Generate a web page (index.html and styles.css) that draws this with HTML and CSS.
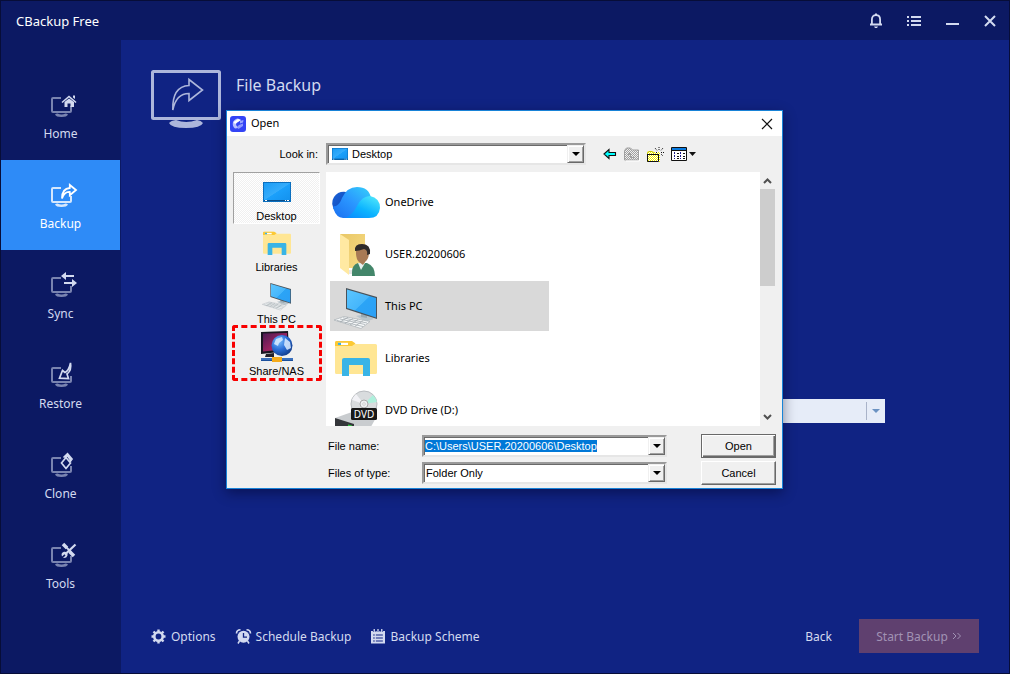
FILE: index.html
```html
<!DOCTYPE html>
<html lang="en">
<head>
<meta charset="utf-8">
<title>CBackup Free</title>
<link rel="stylesheet" href="styles.css">
</head>
<body>
<svg class="defs" aria-hidden="true">
  <defs>
    <linearGradient id="screen" x1="0" y1="0" x2="1" y2="1"><stop offset="0" stop-color="#1b9cf5"/><stop offset=".5" stop-color="#35acfb"/><stop offset=".52" stop-color="#1ba0fb"/><stop offset="1" stop-color="#1492ee"/></linearGradient>
    <linearGradient id="pcscreen" x1="0" y1="0" x2="1" y2="1"><stop offset="0" stop-color="#5cc6ff"/><stop offset=".5" stop-color="#46b6fb"/><stop offset=".52" stop-color="#2ba4f6"/><stop offset="1" stop-color="#2b9ff5"/></linearGradient>
    <linearGradient id="cloudA" x1="0" y1="0" x2="1" y2="1"><stop offset="0" stop-color="#1a63d8"/><stop offset="1" stop-color="#0c3fae"/></linearGradient>
    <linearGradient id="cloudB" x1="0" y1="1" x2="1" y2="0"><stop offset="0" stop-color="#1a6ff0"/><stop offset=".5" stop-color="#2a96ff"/><stop offset="1" stop-color="#35d0fa"/></linearGradient>
    <linearGradient id="cloudC" x1="0" y1="1" x2=".8" y2="0"><stop offset="0" stop-color="#0a86ff"/><stop offset=".5" stop-color="#0cb4ff"/><stop offset="1" stop-color="#4be3fb"/></linearGradient>
    <linearGradient id="folder" x1="0" y1="0" x2="1" y2="1"><stop offset="0" stop-color="#e9c766"/><stop offset="1" stop-color="#f7dc86"/></linearGradient>
    <linearGradient id="nas" x1="0" y1="0" x2="1" y2="1"><stop offset="0" stop-color="#4a1a52"/><stop offset=".6" stop-color="#a02462"/><stop offset="1" stop-color="#d8505c"/></linearGradient>
    <radialGradient id="globe" cx=".35" cy=".3" r=".8"><stop offset="0" stop-color="#7cc0ff"/><stop offset=".5" stop-color="#2b6fd8"/><stop offset="1" stop-color="#10357f"/></radialGradient>
    <symbol id="monitor" viewBox="0 0 32 26">
      <path d="M16 5H8Q7 5 7 6V18Q7 19 8 19H25Q26 19 26 18V13" fill="none" stroke="currentColor" stroke-width="2"/>
      <path d="M10 21.500Q11 20.500 12.500 20.500Q16.500 22.500 20.500 20.500Q22 20.500 23 21.500Q22 24 16.500 24Q11 24 10 21.500Z" fill="currentColor"/>
    </symbol>
    <symbol id="libs" viewBox="0 0 48 48">
      <path d="M3 8.500Q3 7 4.500 7H19L23 10H43.500Q45 10 45 11.500V38.500Q45 40 43.500 40H4.500Q3 40 3 38.500Z" fill="#ffe694"/>
      <path d="M3 12V8.500Q3 7 4.500 7H20L23.500 9.500L20 12Z" fill="#fcc934"/>
      <path d="M6 8.800H16V11H6Z" fill="#fff"/><path d="M6 8.800H9V11H6Z" fill="#39b1e6"/>
      <path d="M10 42V26Q10 24 12 24H36Q38 24 38 26V42H31V31H17V42Z" fill="#39b4e6"/>
    </symbol>
    <symbol id="pc" viewBox="0 0 48 48">
      <path d="M24 34L34 32L42 37L34 39.500Z" fill="#b9c4cb"/><path d="M29 29L35 31V36L29 35Z" fill="#9caab3"/>
      <path d="M14 6L45 15V37L14 27Z" fill="#49525a"/>
      <path d="M15 7.500L44 16V35.500L15 26Z" fill="url(#pcscreen)"/>
      <path d="M2 38L12 34.500L38 39.500L29 46.500Z" fill="#f7f9fa" stroke="#a9b0b5" stroke-width=".7"/>
      <path d="M5 38.500L31 44.500M8 37L33 42.500M11 35.800L35 41M8 40L16 35.300M13 41.500L21 36.500M18 43L26 37.500M23 44.300L31 38.700" stroke="#a3abb0" stroke-width=".8" fill="none"/>
    </symbol>
    <symbol id="desk" viewBox="0 0 28 20"><path d="M0 0H28V20H0Z" fill="#0a6fbf"/><path d="M1 1H27V18H1Z" fill="url(#screen)"/><path d="M1 18H27V19H1Z" fill="#0b4e88"/><path d="M2 18H4V19H2ZM22 18H23V19H22ZM24 18H26V19H24Z" fill="#fff"/></symbol>
    <pattern id="mesh" width="2" height="2" patternUnits="userSpaceOnUse"><path d="M0 0H2V2H0Z" fill="#fff"/><path d="M0 0H1V1H0ZM1 1H2V2H1Z" fill="#f4f000"/></pattern>
    <pattern id="meshOff" width="2" height="2" patternUnits="userSpaceOnUse"><path d="M0 0H2V2H0Z" fill="#f0f0f0"/><path d="M0 0H1V1H0ZM1 1H2V2H1Z" fill="#a0a0a0"/></pattern>
  </defs>
</svg>

<div class="app">
  <header class="titlebar">
    <h1 class="app-name">CBackup Free</h1>
    <div class="window-tools">
      <button class="tool" aria-label="Notifications"><svg width="14" height="16" viewBox="0 0 14 16"><path d="M2.900 11.500V6.500Q2.900 2.200 7 2.200T11.100 6.500V11.500" fill="none" stroke="currentColor" stroke-width="1.800"/><path d="M1 10.500H13V12.500H1ZM6 .5H8V2H6ZM5 13.500H9L8 15H6Z" fill="currentColor"/></svg></button>
      <button class="tool" aria-label="Menu"><svg width="14" height="12" viewBox="0 0 14 12"><path d="M0 1H2V3H0ZM4 1H14V3H4ZM0 5H2V7H0ZM4 5H14V7H4ZM0 9H2V11H0ZM4 9H14V11H4Z" fill="currentColor"/></svg></button>
      <button class="tool" aria-label="Minimize"><svg width="14" height="12" viewBox="0 0 14 12"><path d="M1 8H14V10H1Z" fill="currentColor"/></svg></button>
      <button class="tool" aria-label="Close"><svg width="12" height="12" viewBox="0 0 12 12"><path d="M1 1L11 11M11 1L1 11" stroke="currentColor" stroke-width="2"/></svg></button>
    </div>
  </header>

  <nav class="sidebar">
    <a class="nav-item" href="#home"><svg class="nav-icon" viewBox="0 0 32 26"><use class="dim" href="#monitor"/><path d="M17 9.500L24 3.500L31 9.500" fill="none" stroke="currentColor" stroke-width="1.600"/><path d="M28 2.500H30V6L28 4.500ZM19.500 9L24 5.500L29 9V14H25.500V10.500H22.500V14H19.500Z" fill="currentColor"/></svg>Home</a>
    <a class="nav-item active" href="#backup"><svg class="nav-icon" viewBox="0 0 32 26"><use class="dim" href="#monitor"/><path d="M17 15.500Q17 5.500 24.800 5V2L31 7L24.800 12.200V9Q19.500 8.500 17 15.500Z" fill="none" stroke="currentColor" stroke-width="1.800"/></svg>Backup</a>
    <a class="nav-item" href="#sync"><svg class="nav-icon" viewBox="0 0 32 26"><use class="dim" href="#monitor"/><path d="M16 3L21 -1V2H29V4H21V7ZM32 10L27 14V11H19V9H27V6Z" fill="currentColor"/></svg>Sync</a>
    <a class="nav-item" href="#restore"><svg class="nav-icon" viewBox="0 0 32 26"><use class="dim" href="#monitor"/><path d="M25.500 0Q26.800 7.500 22 11L23.500 15.500L14.500 15.200L17.500 7.500L20 9.500Q24 7.500 25.500 0Z" fill="none" stroke="currentColor" stroke-width="1.700"/></svg>Restore</a>
    <a class="nav-item" href="#clone"><svg class="nav-icon" viewBox="0 0 32 26"><use class="dim" href="#monitor"/><path d="M21 4.500L25.500 10L21 15.500L16.500 10ZM18.500 4.500L22.500 .8L27 6L24.500 9.500M20 4.500L22.500 2.500L25.500 7" fill="none" stroke="currentColor" stroke-width="1.700"/></svg>Clone</a>
    <a class="nav-item" href="#tools"><svg class="nav-icon" viewBox="0 0 32 26"><use class="dim" href="#monitor"/><path d="M18 1L22 5M24.500 8.500L29 13" stroke="currentColor" stroke-width="3.500"/><path d="M21 4L26 9" stroke="currentColor" stroke-width="1.800"/><path d="M30.500 1.500L21 10.500" stroke="currentColor" stroke-width="2.200"/><path d="M17 13.500Q15.500 10 19 8.800Q23 8.500 22.500 12.500Q21.500 15.500 18 15L20.500 12.500L19.500 11.200Z" fill="currentColor"/></svg>Tools</a>
  </nav>

  <main class="main">
    <div class="page-head">
      <svg width="70" height="58" viewBox="0 0 70 58"><rect x="1.500" y="1.500" width="67" height="47" rx="1" fill="none" stroke="currentColor" stroke-width="3"/><path d="M18 53Q20 50.500 25 50Q35 54 46 50Q50 50.500 52 53Q50 58 35 58T18 53Z" fill="currentColor"/><path d="M21.800 40Q21 16.500 38 15.500V9.500L51.500 20L38 30.500V23.500Q25 23.500 21.800 40Z" fill="none" stroke="currentColor" stroke-width="1.600"/></svg>
      <h2 class="page-title">File Backup</h2>
    </div>
    <div class="target"><button class="target-combo" aria-label="Choose destination"><span class="target-arrow"></span></button></div>
    <footer class="footer">
      <a class="foot-link" href="#options"><svg width="15" height="15" viewBox="0 0 15 15"><circle cx="7.500" cy="7.500" r="4.200" fill="none" stroke="currentColor" stroke-width="2.600"/><path d="M7.500 .5V3M7.500 12V14.500M.5 7.500H3M12 7.500H14.500M2.500 2.500L4 4M11 11L12.500 12.500M2.500 12.500L4 11M11 4L12.500 2.500" stroke="currentColor" stroke-width="2.400"/></svg>Options</a>
      <a class="foot-link" href="#schedule"><svg width="15" height="15" viewBox="0 0 15 15"><path d="M.5 4.500Q.5 .8 4.500 .8M14.500 4.500Q14.500 .8 10.500 .8" fill="none" stroke="currentColor" stroke-width="1.600"/><circle cx="7.500" cy="7.800" r="6" fill="currentColor"/><path d="M7.500 4V8.200H11" fill="none" stroke="#102383" stroke-width="1.300"/><path d="M3.500 12L2 14.500M11.500 12L13 14.500" stroke="currentColor" stroke-width="1.500"/></svg>Schedule Backup</a>
      <a class="foot-link" href="#scheme"><svg width="14" height="15" viewBox="0 0 13 15" preserveAspectRatio="none"><path d="M0 2H13V14.500H0Z" fill="currentColor"/><path d="M3 0V3M6.500 0V3M10 0V3" stroke="#102383" stroke-width="2.400"/><path d="M3 0V3M6.500 0V3M10 0V3" stroke="currentColor" stroke-width="1.200"/><path d="M2 6H3.500M4.500 6H11M2 9H3.500M4.500 9H11M2 12H3.500M4.500 12H11" stroke="#102383"/></svg>Backup Scheme</a>
      <button class="back">Back</button>
      <button class="start" disabled>Start Backup <svg width="10" height="8" viewBox="0 0 10 8"><path d="M1 1L4 4L1 7M5.500 1L8.500 4L5.500 7" fill="none" stroke="currentColor"/></svg></button>
    </footer>
  </main>

  <section class="dialog" role="dialog" aria-labelledby="dlg-title">
    <div class="dlg-bar">
      <svg width="16" height="16" viewBox="0 0 16 16"><rect width="16" height="16" rx="3" fill="#3344f5"/><path d="M3 6Q5 2.500 8 2.500L11 4L6.500 6.500L6 9L8.500 12L5 12.500Q2 10 3 6Z" fill="#b9c0ff"/><path d="M3.500 6L8 3L11 4L5 8Z" fill="#fff"/><path d="M10 5L13.500 4L13 6.500L10 7.500Z" fill="#9aa5ff"/><path d="M9 9L13 7.500V10L8.500 13L7 11Z" fill="#8e99ff"/></svg>
      <h3 class="dlg-title" id="dlg-title">Open</h3>
      <button class="dlg-close" aria-label="Close dialog"><svg width="12" height="12" viewBox="0 0 12 12"><path d="M1 1L11 11M11 1L1 11" stroke="#111" stroke-width="1.200"/></svg></button>
    </div>

    <div class="look">
      <label class="look-label" for="lookin">Look in:</label>
      <span class="combo look-combo"><svg width="16" height="12" viewBox="0 0 28 20" preserveAspectRatio="none"><use href="#desk"/></svg><select id="lookin"><option>Desktop</option></select><span class="drop"></span></span>
      <div class="look-tools">
        <button aria-label="Back one folder"><svg width="14" height="12" viewBox="0 0 14 12"><path d="M1 6L6 1.500V4.500H12.500V7.500H6V10.500Z" fill="#0ff" stroke="#111" stroke-width="1.100"/></svg></button>
        <button aria-label="Up one level" disabled><svg width="16" height="14" viewBox="0 0 16 14"><path d="M.5 13V3.500L2.500 1H6.500L8.500 3H14.500V13Z" fill="url(#meshOff)" stroke="#a0a0a0"/><path d="M4 7H5V6H7V7H8V8H7V10H11V11H6V8H4Z" fill="#a0a0a0"/><path d="M15.500 4V14H2" fill="none" stroke="#fff"/></svg></button>
        <button aria-label="New folder"><svg width="17" height="15" viewBox="0 0 17 15"><path d="M0 15V5L2 4H5L7 5H13V15Z" fill="url(#mesh)"/><path d="M.5 7V5.500L2 4.500H5L6.500 5.500V7" stroke="#c8c800" fill="none"/><path d="M.5 7V14.500H11.500V7.500M.5 7.500H12" fill="none" stroke="#111"/><path d="M12 0V3M8 1L10.500 4M16 1L13.500 4M14 5.500H17M14 7L16 9M9 5.500H10.500" stroke="#111" stroke-dasharray="1 1"/></svg></button>
        <button aria-label="View menu"><svg width="25" height="14" viewBox="0 0 25 14"><path d="M.5 .5H15.500V13.500H.5Z" fill="#fff" stroke="#111"/><path d="M1 1H15V3H1Z" fill="#0a7be0"/><path d="M1 3.500H15" stroke="#111"/><path d="M3 5H4V7H3ZM3 8H4V10H3ZM3 11H4V12H3ZM9 5H10V7H9ZM9 8H10V10H9ZM9 11H10V12H9Z" fill="#1a1a8c"/><path d="M6 6.500H8M6 9.500H8M6 11.500H8M12 6.500H14M12 9.500H14M12 11.500H14" stroke="#111"/><path d="M18 5H25L21.500 9Z" fill="#111"/></svg></button>
      </div>
    </div>

    <div class="browser">
      <div class="places">
        <button class="place on"><svg width="28" height="20"><use href="#desk"/></svg>Desktop</button>
        <button class="place"><svg width="32" height="32"><use href="#libs"/></svg>Libraries</button>
        <button class="place"><svg width="32" height="32"><use href="#pc"/></svg>This PC</button>
        <button class="place marked"><svg width="34" height="32" viewBox="0 0 34 32"><path d="M1 1L28 0L29 20L1 23Z" fill="#171520"/><path d="M3 2.500L27 2V18L3 20.500Z" fill="url(#nas)"/><path d="M6 23L14 22V26H5Z" fill="#22202a"/><circle cx="22" cy="14.500" r="10.500" fill="url(#globe)"/><path d="M16 8L22 6L23 9L19 12L18 15L14 13ZM25 7L30 11L31 17L27 19L24 14Z" fill="#dcecff" opacity=".85"/><path d="M1 27H33V30H1Z" fill="#1b4f9c"/><path d="M1 27.500H33V28.500H1Z" fill="#5a93dc"/><path d="M12 26H22V31H12Z" fill="#f4ab1c"/></svg>Share/NAS</button>
      </div>
      <div class="files">
        <div class="file-list">
          <button class="file"><svg width="48" height="48" viewBox="0 0 48 48"><path d="M3 33Q-2 25 2 19Q6 13 14 14L20 22L8 38Z" fill="url(#cloudA)"/><path d="M2 32Q-1 28 4 28Q8 26 10 20Q15 9 25 9Q37 9 39 20L30 26L20 40H11Q4 39 2 32Z" fill="url(#cloudB)"/><path d="M12 40Q20 38 25 28Q30 18 38 18Q48 20 48 30Q47 40 37 40Z" fill="url(#cloudC)"/></svg><span>OneDrive</span></button>
          <button class="file"><svg width="48" height="48" viewBox="0 0 48 48"><path d="M8 4H33V38H15Z" fill="url(#folder)"/><path d="M8 4L17 10V45L8 38Z" fill="#ffe9a2"/><path d="M17 44H28V40H17Z" fill="#e6e6e6"/><path d="M20 46V42Q20 35 26 33H35Q43 36 43 46Z" fill="#43866a"/><path d="M26 33L29 40L33 33Z" fill="#e7f1ef"/><path d="M24 18Q24 14 30 14Q37 14 37 22Q37 29 33 32L31 35L27 32Q24 29 24 23Z" fill="#a87a55"/><path d="M23 21Q22 14 30 14Q39 14 38 24L35 25Q36 20 32 19Q27 21 23 21Z" fill="#2f2b2a"/></svg><span>USER.20200606</span></button>
          <button class="file selected"><svg width="48" height="48"><use href="#pc"/></svg><span>This PC</span></button>
          <button class="file"><svg width="48" height="48"><use href="#libs"/></svg><span>Libraries</span></button>
          <button class="file"><svg width="48" height="48" viewBox="0 0 48 48"><path d="M3 32L20 26L45 30L36 46H20Z" fill="#c9cccf"/><path d="M3 32L22 38V48H3Z" fill="#34363a"/><path d="M16 38.500L20 39.500V41L16 40Z" fill="#2fd043"/><circle cx="32" cy="18" r="13" fill="#d9dcde" stroke="#b9bcc0"/><path d="M32 18L41 9Q44 12 45 16Z" fill="#aef0dc"/><path d="M32 18L20 14Q21 11 24 8Z" fill="#f2f2f6"/><circle cx="32" cy="18" r="4" fill="#eef0f2" stroke="#aaa"/><circle cx="32" cy="18" r="1.300" fill="#fff" stroke="#aaa" stroke-width=".5"/><rect x="19" y="22" width="26" height="12" rx="1.500" fill="#191919"/><text x="32" y="32" class="dvd">DVD</text></svg><span>DVD Drive (D:)</span></button>
        </div>
        <div class="scrollbar">
          <svg width="9" height="6" viewBox="0 0 9 6"><path d="M1 5L4.500 1.500L8 5" fill="none" stroke="#505050" stroke-width="2"/></svg>
          <span class="track"><span class="thumb"></span></span>
          <svg width="9" height="6" viewBox="0 0 9 6"><path d="M1 1L4.500 4.500L8 1" fill="none" stroke="#505050" stroke-width="2"/></svg>
        </div>
      </div>
    </div>

    <form class="fields">
      <label for="fname">File name:</label>
      <span class="combo"><input id="fname" type="text" value="C:\Users\USER.20200606\Desktop" spellcheck="false"><span class="drop"></span></span>
      <button type="button" class="btn default">Open</button>
      <label for="ftype">Files of type:</label>
      <span class="combo"><select id="ftype"><option>Folder Only</option></select><span class="drop"></span></span>
      <button type="button" class="btn">Cancel</button>
    </form>
  </section>
</div>
<script src="main.js"></script>
</body>
</html>
```

FILE: styles.css
```css
* { box-sizing: border-box; }
body { margin: 0; font-family: "Noto Sans", sans-serif; font-size: 12px; }
button, select, input { font: inherit; color: inherit; border: 0; padding: 0; margin: 0; background: none; outline: 0; }
h1, h2, h3 { margin: 0; font-weight: 400; }
a { color: inherit; text-decoration: none; }
svg { display: block; flex: none; overflow: visible; }
.defs { position: absolute; width: 0; height: 0; }

.app {
  position: relative;
  display: grid;
  grid-template: auto 1fr / 120px 1fr;
  min-height: 100vh;
  border: 1px solid #070d38;
  background: #102383;
  color: #d3daf0;
}

.titlebar {
  grid-column: 1 / -1;
  display: flex;
  justify-content: space-between;
  align-items: center;
  height: 39px;
  padding: 0 12px 0 15px;
  background: #0c1963;
}
.app-name { font-size: 13px; color: #fff; }
.window-tools { display: flex; gap: 24px; }
.tool { display: grid; place-items: center; width: 14px; height: 16px; }

.sidebar { padding-top: 30px; background: #0c1963; }
.nav-item {
  display: flex;
  flex-direction: column;
  align-items: center;
  gap: 6px;
  height: 90px;
  margin-right: 1px;
  padding-top: 23px;
  font-size: 12px;
  line-height: 18px;
}
.nav-icon { width: 32px; height: 26px; }
.dim { opacity: .55; }
.active { background: #2e8bf7; color: #fff; }
.active .dim { opacity: .8; }

.main { display: flex; flex-direction: column; padding: 30px 30px 20px; }
.page-head { display: flex; gap: 15px; color: #adb6db; }
.page-title { font-size: 16px; line-height: 30px; color: #d3daf0; }
.target { display: flex; justify-content: flex-end; padding: 271px 94px 0 0; }
.target-combo { display: flex; justify-content: flex-end; align-items: center; width: 480px; height: 24px; background: #e6ecf8; }
.target-arrow { display: grid; place-items: center; width: 19px; height: 18px; border-left: 1px solid #a9b3c9; }
.target-arrow::before { content: ""; border: 4px solid transparent; border-top-color: #6b92c2; border-bottom: 0; }

.footer { display: flex; align-items: center; gap: 20px; margin-top: auto; }
.foot-link { display: flex; align-items: center; gap: 5px; }
.back { margin-left: auto; margin-right: 7px; }
.start { display: flex; justify-content: center; align-items: center; gap: 4px; width: 120px; height: 34px; background: #5f406f; color: #a192b4; }

.dialog {
  position: absolute;
  left: 225px;
  top: 109px;
  width: 557px;
  border: 1px solid #1883d7;
  background: #f0f0f0;
  color: #000;
  font-family: "Liberation Sans", sans-serif;
  font-size: 11px;
  box-shadow: 0 4px 12px rgba(0, 0, 30, .45);
}
.dlg-bar { display: flex; align-items: center; gap: 5px; height: 25px; padding: 0 9px 0 3px; background: #fff; }
.dlg-title { padding-bottom: 2px; font-family: "Noto Sans", sans-serif; font-size: 11px; }
.dlg-close { margin-left: auto; }

.look { display: flex; align-items: center; height: 36px; }
.look-label { width: 91px; text-align: right; margin-right: 8px; }
.look-combo { width: 260px; padding-left: 4px; }
.look-tools { display: flex; align-items: center; gap: 7px; margin-left: 17px; }

.combo {
  display: flex;
  align-items: center;
  height: 22px;
  border: 2px solid;
  border-color: #9a9a9a #e6e6e6 #e6e6e6 #9a9a9a;
  box-shadow: inset 1px 1px #6a6a6a;
  background: #fff;
}
.combo select, .combo input { flex: 1; min-width: 0; height: 16px; appearance: none; padding-left: 2px; }
.look-combo select { padding-left: 4px; }
.combo input { padding-left: 1px; }
.combo input::selection { background: #0078d7; color: #fff; }
.drop {
  display: grid;
  place-items: center;
  width: 17px;
  height: 18px;
  border: 1px solid;
  border-color: #f0f0f0 #696969 #696969 #f0f0f0;
  box-shadow: inset 1px 1px #fff, inset -1px -1px #a0a0a0;
  background: #f0f0f0;
}
.drop::before { content: ""; border: 4px solid transparent; border-top-color: #000; border-bottom: 0; }

.browser { display: flex; gap: 6px; padding: 0 7px 0 6px; }
.places { width: 87px; }
.place {
  position: relative;
  display: flex;
  flex-direction: column;
  align-items: center;
  justify-content: flex-end;
  gap: 1px;
  width: 100%;
  height: 52px;
  padding-bottom: 2px;
  line-height: 14px;
}
.place.on {
  gap: 7px;
  padding-bottom: 0;
  border: 1px solid;
  border-color: #a0a0a0 #fff #fff #a0a0a0;
  background: repeating-conic-gradient(#fff 0 25%, #f0f0f0 0 50%) 0 0 / 2px 2px;
}
.marked::after { content: ""; position: absolute; inset: -3px -2px -1px -1px; border: 3px dashed #f80000; border-radius: 3px; }

.files { display: flex; flex: 1; height: 254px; background: #fff; }
.file-list { flex: 1; display: flex; flex-direction: column; gap: 2px; padding: 5px 4px 0; overflow: hidden; }
.file {
  display: flex;
  flex: none;
  align-items: center;
  gap: 5px;
  width: 219px;
  height: 50px;
  padding-left: 2px;
  font-family: "Noto Sans", sans-serif;
  font-size: 11px;
}
.file span { padding-bottom: 2px; }
.selected { background: #d9d9d9; }
.dvd { font: 10px "Noto Sans", sans-serif; fill: #fff; text-anchor: middle; }
.scrollbar { display: flex; flex-direction: column; align-items: center; gap: 5px; width: 15px; padding: 6px 0; background: #f0f0f0; }
.track { flex: 1; width: 15px; }
.thumb { display: block; height: 97px; background: #cdcdcd; }

.fields {
  display: grid;
  grid-template-columns: 94px 245px 1fr;
  row-gap: 3px;
  align-items: center;
  padding: 8px 6px 3px 101px;
}
.btn {
  justify-self: end;
  width: 75px;
  height: 24px;
  border: 1px solid;
  border-color: #fff #696969 #696969 #fff;
  box-shadow: inset -1px -1px #a0a0a0;
  background: #f0f0f0;
}
.btn.default { border-color: #696969; box-shadow: inset 1px 1px #fff, inset -1px -1px #696969, inset -2px -2px #a0a0a0; }
```

FILE: main.js
```js
const fileName = document.getElementById('fname');
fileName.focus();
fileName.select();
```
